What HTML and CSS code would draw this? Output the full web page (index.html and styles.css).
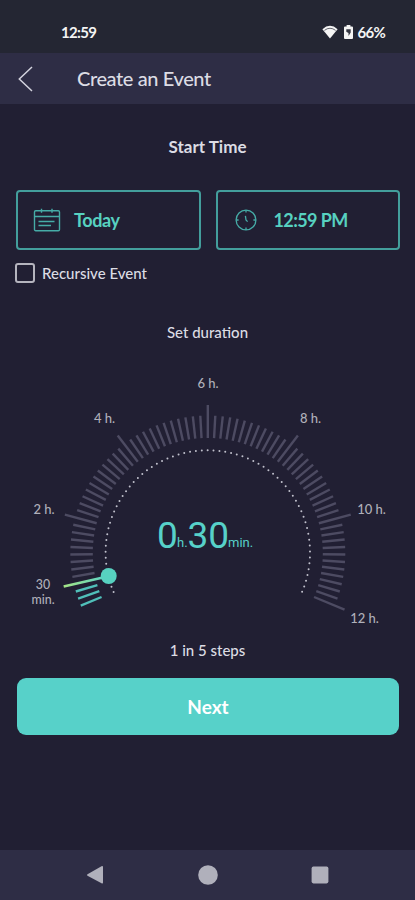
FILE: index.html
```
<!DOCTYPE html>
<html lang="en">
<head>
    <meta charset="utf-8">
    <title>Create an Event</title>
    <link rel="stylesheet" href="styles.css">
</head>
<body>
    <div class="screen">
        <div class="status-bar">
            <span class="status-time">12:59</span>
            <div class="status-right">
                <svg class="wifi" width="16" height="14" viewBox="0 0 16 14">
                    <path d="M0.4 4.3 Q8 -2.6 15.6 4.3 L8 13.6 Z" fill="#f4f4f4"/>
                    <path d="M2.4 5.4 Q8 1.1 13.6 5.4" fill="none" stroke="#242633" stroke-width="0.7"/>
                </svg>
                <svg class="battery" width="9" height="14" viewBox="0 0 9 14">
                    <path d="M2.6 0h3.8v1.6H8a1 1 0 0 1 1 1V13a1 1 0 0 1-1 1H1a1 1 0 0 1-1-1V2.6a1 1 0 0 1 1-1h1.6z" fill="#f4f4f4"/>
                    <path d="M2.3 4.2h4.4v3.3L4.5 11V8L2.3 6.8z" fill="#343641"/>
                </svg>
                <span>66%</span>
            </div>
        </div>

        <header class="app-bar">
            <svg class="back" width="16" height="26" viewBox="0 0 16 26">
                <path d="M14 1L1.3 13L14 25" fill="none" stroke="#d3d3de" stroke-width="1.5"/>
            </svg>
            <h1>Create an Event</h1>
        </header>

        <main class="content">
            <h2>Start Time</h2>
            <div class="pickers">
                <button class="picker">
                    <svg class="picker-icon" width="28" height="24" viewBox="0 0 28 24" fill="none" stroke="#46aca7" stroke-width="1.4">
                        <rect x="1.5" y="2.7" width="25" height="20" rx="1.2"/>
                        <path d="M1.5 8.5h25M8.5 0.8v4M19 0.8v4M5.5 13.5h16M5.5 17.5h12.5"/>
                    </svg>
                    <span>Today</span>
                </button>
                <button class="picker picker-clock">
                    <svg class="picker-icon" width="24" height="24" viewBox="0 0 24 24" fill="none" stroke="#46aca7" stroke-width="1.3">
                        <circle cx="12" cy="12" r="9.9"/>
                        <path d="M12 2v2.6M12 19.4V22M2 12h2.6M19.4 12H22M11.4 7.8L12 12l1.6 1.6"/>
                    </svg>
                    <span class="picker-time">12:59 PM</span>
                </button>
            </div>
            <label class="recursive">
                <input type="checkbox">
                <span>Recursive Event</span>
            </label>

            <p class="duration-title">Set duration</p>
            <svg class="dial" width="415" height="270" viewBox="0 360 415 270">
                <defs>
                    <linearGradient id="hand" gradientUnits="userSpaceOnUse" x1="64" y1="586" x2="108" y2="576">
                        <stop offset="0" stop-color="#a4e487"/>
                        <stop offset="1" stop-color="#57d1c9"/>
                    </linearGradient>
                </defs>
                <g id="ticks"></g>
                <path class="track" pathLength="68.05" d="M113.6 592.1 A102.2 102.2 0 1 1 302 592.1"/>
                <circle class="knob" cx="108.7" cy="576" r="8"/>
                <g class="labels">
                    <text x="208" y="388">6 h.</text>
                    <text x="104.5" y="423">4 h.</text>
                    <text x="310.5" y="423">8 h.</text>
                    <text x="44" y="514">2 h.</text>
                    <text x="371.5" y="514">10 h.</text>
                    <text x="364.5" y="622.5">12 h.</text>
                    <text class="label-small" x="43" y="588.5">30</text>
                    <text class="label-small" x="43" y="603.5">min.</text>
                </g>
                <g class="value">
                    <text class="big" x="157" y="547.5">0</text>
                    <text class="unit" x="177" y="547">h.</text>
                    <text class="big" x="187.5" y="547.5">30</text>
                    <text class="unit" x="228" y="547">min.</text>
                </g>
            </svg>
            <p class="steps">1 in 5 steps</p>
            <button class="next">Next</button>
        </main>

        <nav class="nav-bar">
            <svg width="18" height="20" viewBox="0 0 18 20"><path d="M1.5 9.2L15.5 1.2Q17 0.7 17 2V17.5Q17 19 15.5 18.3L1.5 10.8Q0.3 10 1.5 9.2z"/></svg>
            <svg width="20" height="20" viewBox="0 0 20 20"><circle cx="10" cy="10" r="9.8"/></svg>
            <svg width="18" height="18" viewBox="0 0 18 18"><rect x="0.6" y="0.6" width="16.8" height="16.8" rx="1.8"/></svg>
        </nav>
    </div>
    <script src="dial.js"></script>
</body>
</html>
```
FILE: styles.css
```
* {
    box-sizing: border-box;
}
body {
    margin: 0;
    background-color: #211f33;
    color: #dcdce4;
    font-family: Lato, sans-serif;
    font-weight: 500;
}
h1, h2, p {
    margin: 0;
}
button {
    font-family: inherit;
    cursor: pointer;
}
.screen {
    width: 415px;
    height: 900px;
    display: flex;
    flex-direction: column;
    overflow: hidden;
}
.status-bar {
    height: 53px;
    padding: 11px 30px 0 61px;
    display: flex;
    align-items: center;
    justify-content: space-between;
    background-color: #242633;
    color: #f4f4f4;
    font-size: 15px;
    font-weight: 700;
    letter-spacing: -0.7px;
}
.status-right {
    display: flex;
    align-items: center;
}
.wifi {
    margin-right: 6px;
}
.battery {
    margin-right: 4px;
}
.app-bar {
    height: 51px;
    padding-left: 18px;
    display: flex;
    align-items: center;
    background-color: #2e2d45;
}
.back {
    margin-right: 43px;
}
h1 {
    font-size: 20px;
    font-weight: 500;
    line-height: 24px;
    letter-spacing: -0.4px;
    padding-bottom: 2px;
}
.content {
    flex: 1;
    display: flex;
    flex-direction: column;
}
h2 {
    margin-top: 33px;
    font-size: 17px;
    font-weight: 700;
    line-height: 20px;
    text-align: center;
}
.pickers {
    margin: 33px 15px 0 16px;
    display: grid;
    grid-template-columns: 1fr 1fr;
    gap: 15px;
}
.picker {
    height: 60px;
    padding: 0 15px;
    display: flex;
    align-items: center;
    gap: 13px;
    border: 2px solid #439e9c;
    border-radius: 4px;
    background: none;
    color: #57d1c0;
    font-size: 18px;
    font-weight: 700;
    letter-spacing: -0.4px;
}
.picker-clock {
    padding-left: 16px;
}
.picker-time {
    margin-left: 3px;
    letter-spacing: -0.6px;
}
.recursive {
    margin: 13px 0 0 15px;
    height: 20px;
    display: flex;
    align-items: center;
    gap: 7px;
    font-size: 15px;
}
.recursive input {
    appearance: none;
    width: 20px;
    height: 20px;
    margin: 0;
    border: 2px solid #b5b4be;
    border-radius: 3px;
}
.duration-title {
    margin-top: 40px;
    font-size: 15px;
    line-height: 18px;
    text-align: center;
}
.dial {
    display: block;
    margin-top: 19px;
}
.tick {
    stroke: #4d4b62;
    stroke-width: 2.4;
}
.tick-active {
    stroke: #50bfb9;
}
.tick-hand {
    stroke: url(#hand);
    stroke-width: 2.6;
}
.track {
    fill: none;
    stroke: #c0c0cc;
    stroke-width: 2;
    stroke-linecap: round;
    stroke-dasharray: 0 1;
}
.knob {
    fill: #57d1c0;
}
.labels {
    fill: #b0b0ba;
    font-size: 13px;
    text-anchor: middle;
}
.label-small {
    font-size: 12.4px;
}
.value {
    fill: #57d1c9;
    font-family: Roboto, sans-serif;
    font-weight: 400;
}
.big {
    font-size: 37px;
}
.unit {
    font-size: 13px;
}
.steps {
    margin-top: 11px;
    font-size: 15px;
    line-height: 18px;
    text-align: center;
}
.next {
    height: 57px;
    margin: 19px 16px 0 17px;
    border: none;
    border-radius: 9px;
    background-color: #57d1c9;
    color: #ffffff;
    font-size: 19px;
    font-weight: 700;
}
.nav-bar {
    height: 50px;
    padding: 0 86px;
    display: flex;
    align-items: center;
    justify-content: space-between;
    background-color: #2e2d45;
    fill: #b0b0bb;
}
```
FILE: dial.js
```
// 12 hours in 10 minute ticks over a 225 degree arc
const CENTER_X = 207.8;
const CENTER_Y = 553;
const TICKS = 72;
const SELECTED = 3;

const group = document.getElementById('ticks');

for (let i = 0; i <= TICKS; i++) {
    const angle = (157.5 + i * 225 / TICKS) * Math.PI / 180;
    const isHand = i === SELECTED;
    const isLong = isHand || (i > 0 && i % 12 === 0);
    const inner = isHand ? 102 : 115;
    const outer = isLong ? 148 : 137.5;

    const line = document.createElementNS('http://www.w3.org/2000/svg', 'line');
    line.setAttribute('x1', CENTER_X + inner * Math.cos(angle));
    line.setAttribute('y1', CENTER_Y + inner * Math.sin(angle));
    line.setAttribute('x2', CENTER_X + outer * Math.cos(angle));
    line.setAttribute('y2', CENTER_Y + outer * Math.sin(angle));
    line.setAttribute('class', 'tick' + (isHand ? ' tick-hand' : i < SELECTED ? ' tick-active' : ''));
    group.appendChild(line);
}
```
